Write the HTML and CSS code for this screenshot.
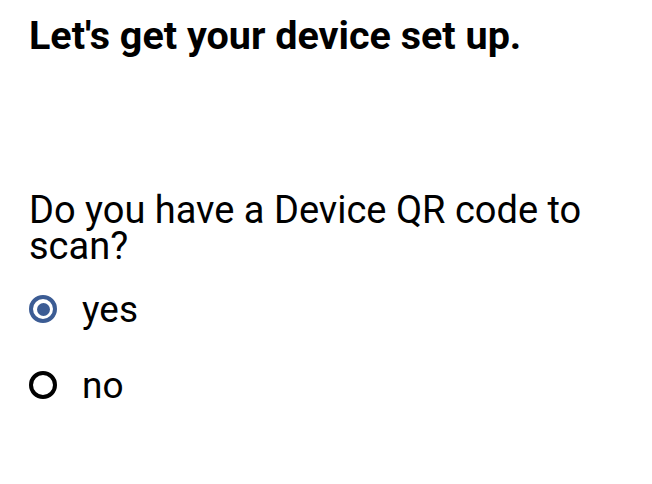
FILE: index.html
```html
<!DOCTYPE html>
<html>
<head>
<meta charset="utf-8">
<link rel="stylesheet" href="styles.css">
</head>
<body>
<main class="page">
  <h1 class="title">Let's get your device set up.</h1>
  <section class="question" role="radiogroup" aria-labelledby="qr-prompt">
    <p class="prompt" id="qr-prompt">Do you have a Device QR code to scan?</p>
    <label class="option">
      <input type="radio" name="qr" value="yes" checked>
      <span class="mark"></span>
      <span class="label">yes</span>
    </label>
    <label class="option">
      <input type="radio" name="qr" value="no">
      <span class="mark"></span>
      <span class="label">no</span>
    </label>
  </section>
</main>
</body>
</html>
```
FILE: styles.css
```css
html, body {
  margin: 0;
  padding: 0;
  background: #ffffff;
}
body {
  font-family: Roboto, "Liberation Sans", sans-serif;
  color: #000000;
}
.page {
  padding: 12px 29px 0 29px;
}
.title {
  margin: 0;
  font-size: 39.5px;
  font-weight: 700;
  line-height: 48px;
}
.question {
  margin-top: 132px;
  display: flex;
  flex-direction: column;
  gap: 26px;
}
.prompt {
  margin: 0 0 -6px 0;
  font-size: 38px;
  line-height: 36px;
}
.option {
  position: relative;
  display: flex;
  align-items: center;
  gap: 25px;
  height: 50px;
  font-size: 37px;
}
.option input {
  position: absolute;
  opacity: 0;
  width: 0;
  height: 0;
  margin: 0;
}
.mark {
  box-sizing: border-box;
  width: 28px;
  height: 28px;
  border-radius: 50%;
  border: 4px solid #000000;
  display: flex;
  align-items: center;
  justify-content: center;
  flex: none;
}
.option input:checked + .mark {
  border-color: #3c5c94;
}
.option input:checked + .mark::after {
  content: "";
  width: 13px;
  height: 13px;
  border-radius: 50%;
  background: #3c5c94;
}
```
